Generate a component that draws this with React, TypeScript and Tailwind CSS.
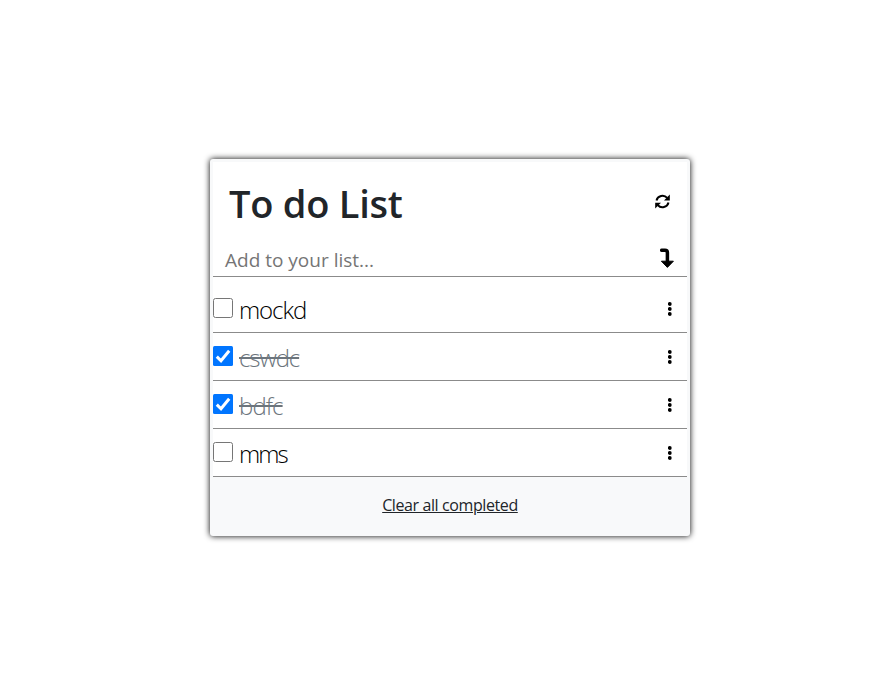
type Task = { label: string; done: boolean; tracking: string };

const tasks: Task[] = [
  { label: 'mockd', done: false, tracking: 'tracking-[-1.1px]' },
  { label: 'cswdc', done: true, tracking: 'tracking-[-1.1px]' },
  { label: 'bdfc', done: true, tracking: 'tracking-[-0.9px]' },
  { label: 'mms', done: false, tracking: 'tracking-[-2px]' },
];

function RefreshIcon() {
  return (
    <svg className="h-[15px] w-[15px]" viewBox="0 0 16 16" fill="none" stroke="#000" strokeWidth="2.1">
      <path d="M1.6 7A6.6 6.6 0 0 1 13 4.2" />
      <path d="M14.4 9A6.6 6.6 0 0 1 3 11.8" />
      <path d="M15.8.6v6.2H9.6z" fill="#000" stroke="none" />
      <path d="M.2 15.4V9.2h6.2z" fill="#000" stroke="none" />
    </svg>
  );
}

function EnterIcon() {
  return (
    <svg className="h-5 w-[14px]" viewBox="0 0 14 20">
      <path d="M1.7 2.2H5q2.4 0 2.4 2.4V14" fill="none" stroke="#000" strokeWidth="3.5" strokeLinecap="round" />
      <path d="M1.4 13.2h12L7.4 19.4z" fill="#000" stroke="#000" strokeWidth="1" strokeLinejoin="round" />
    </svg>
  );
}

function MoreIcon() {
  return (
    <svg className="h-[14px] w-1" viewBox="0 0 4 14">
      <circle cx="1.8" cy="2" r="1.9" />
      <circle cx="1.8" cy="7" r="1.9" />
      <circle cx="1.8" cy="12" r="1.9" />
    </svg>
  );
}

function Checkbox({ checked }: { checked: boolean }) {
  return checked ? (
    <span className="block h-5 w-5 rounded-[1.5px] bg-[#0075ff]">
      <svg viewBox="0 0 20 20" className="h-5 w-5" fill="none" stroke="#fff" strokeWidth="3">
        <path d="M3.8 10.6l4.2 4.2L16.2 4.7" />
      </svg>
    </span>
  ) : (
    <span className="block h-5 w-5 rounded-[2.5px] border border-[#767676] bg-white" />
  );
}

export default function App() {
  return (
    <main className="h-[693px] w-full overflow-hidden bg-white pl-[210px] pt-[159px] font-['Open_Sans','Noto_Sans',sans-serif] text-[#212529]">
      <section className="h-[377px] w-[480px] rounded-[3px] bg-[#f8f9fa] p-[3px] shadow-[0_0_6px_#000]">
        <div className="bg-white">
          <header className="flex h-[79px] items-start justify-between pl-4 pr-[17px]">
            <h1 className="pt-[17px] text-[38px] font-semibold leading-[48px] tracking-[-0.25px] whitespace-nowrap">To do List</h1>
            <button className="mt-8" aria-label="Refresh"><RefreshIcon /></button>
          </header>
          <div className="flex h-[36px] items-start justify-between border-b border-[#8b8b8b] pl-3 pr-[13px]">
            <span className="pt-[5px] text-[19px] leading-[28px] text-[#757575]">Add to your list...</span>
            <button className="mt-[7px]" aria-label="Add"><EnterIcon /></button>
          </div>
          <ul className="pt-2">
            {tasks.map((task) => (
              <li key={task.label} className="flex h-12 items-start border-b border-[#8b8b8b]">
                <div className="mt-[13px]"><Checkbox checked={task.done} /></div>
                <span className={`ml-1.5 mt-[9px] text-[24px] font-light leading-[32px] ${task.tracking} ${task.done ? 'text-[#6c757d] line-through' : 'text-black'}`}>{task.label}</span>
                <button className="ml-auto mr-[15px] mt-[17px]" aria-label="More"><MoreIcon /></button>
              </li>
            ))}
          </ul>
        </div>
        <footer className="flex justify-center pt-4">
          <button className="text-[16px] leading-6 tracking-[-0.4px] underline">Clear all completed</button>
        </footer>
      </section>
    </main>
  );
}
